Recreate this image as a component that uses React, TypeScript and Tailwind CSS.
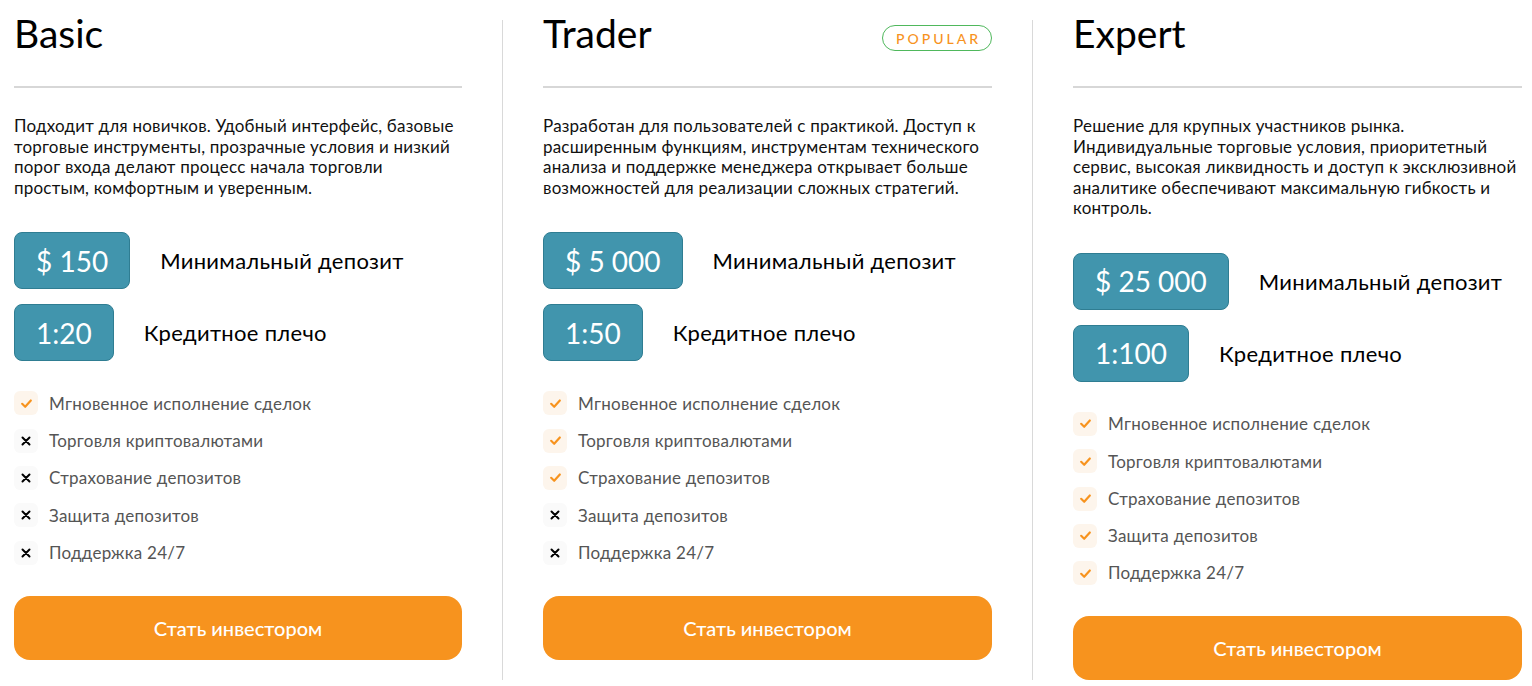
import React from 'react';

type Plan = {
  name: string;
  popular?: boolean;
  text: React.ReactNode;
  deposit: string;
  leverage: string;
  features: [string, boolean][];
};

const labels = [
  'Мгновенное исполнение сделок',
  'Торговля криптовалютами',
  'Страхование депозитов',
  'Защита депозитов',
  'Поддержка 24/7',
];

const plans: Plan[] = [
  {
    name: 'Basic',
    text: 'Подходит для новичков. Удобный интерфейс, базовые торговые инструменты, прозрачные условия и низкий порог входа делают процесс начала торговли простым, комфортным и уверенным.',
    deposit: '$ 150',
    leverage: '1:20',
    features: labels.map((l, i) => [l, i < 1] as [string, boolean]),
  },
  {
    name: 'Trader',
    popular: true,
    text: 'Разработан для пользователей с практикой. Доступ к расширенным функциям, инструментам технического анализа и поддержке менеджера открывает больше возможностей для реализации сложных стратегий.',
    deposit: '$ 5 000',
    leverage: '1:50',
    features: labels.map((l, i) => [l, i < 3] as [string, boolean]),
  },
  {
    name: 'Expert',
    text: (
      <>
        Решение для крупных участников рынка.
        <br />
        Индивидуальные торговые условия, приоритетный сервис, высокая ликвидность и доступ к эксклюзивной аналитике обеспечивают максимальную гибкость и контроль.
      </>
    ),
    deposit: '$ 25 000',
    leverage: '1:100',
    features: labels.map((l) => [l, true] as [string, boolean]),
  },
];

function Check() {
  return (
    <span className="flex h-6 w-6 shrink-0 items-center justify-center rounded-md bg-[#fdf5ec]">
      <svg width="13" height="13" viewBox="0 0 12 12" fill="none">
        <path d="M2 6.3 4.8 9 10 3.2" stroke="#f7931e" strokeWidth="2" strokeLinecap="round" strokeLinejoin="round" />
      </svg>
    </span>
  );
}

function Cross() {
  return (
    <span className="flex h-6 w-6 shrink-0 items-center justify-center rounded-md bg-[#fafafa]">
      <svg width="10" height="10" viewBox="0 0 10 10" fill="none">
        <path d="M1.5 1.5 8.5 8.5M8.5 1.5 1.5 8.5" stroke="#000" strokeWidth="2" strokeLinecap="round" />
      </svg>
    </span>
  );
}

function PlanColumn({ plan }: { plan: Plan }) {
  return (
    <div className="flex flex-col">
      <div className="flex h-[26px] items-start justify-between">
        <h2 className="text-[39px] leading-[26px] text-black">{plan.name}</h2>
        {plan.popular && (
          <span className="mt-[5px] flex h-[26px] w-[110px] items-center justify-center rounded-full border-[1.5px] border-[#4fb85c] pl-[3px] text-[14px] font-medium tracking-[3px] text-[#f7931e]">
            POPULAR
          </span>
        )}
      </div>
      <div className="mt-[40px] h-[2px] bg-[#d7d7d7]" />
      <p className="mt-[28px] text-[17px] leading-[20.6px] tracking-[0.2px] text-[#111]">{plan.text}</p>

      <div className="mt-[34px] flex flex-col gap-[15px]">
        <div className="flex items-center gap-[30px]">
          <span className="flex h-[57px] items-center rounded-lg border border-[#2f7d92] bg-[#4195ad] px-[21px] text-[28px] text-white">
            {plan.deposit}
          </span>
          <span className="text-[22px] tracking-[0.3px] text-black">Минимальный депозит</span>
        </div>
        <div className="flex items-center gap-[30px]">
          <span className="flex h-[57px] items-center rounded-lg border border-[#2f7d92] bg-[#4195ad] px-[21px] text-[28px] text-white">
            {plan.leverage}
          </span>
          <span className="text-[22px] tracking-[0.3px] text-black">Кредитное плечо</span>
        </div>
      </div>

      <ul className="mt-[30px] flex flex-col gap-[13.3px]">
        {plan.features.map(([label, ok]) => (
          <li key={label} className="flex h-6 items-center gap-[11px] text-[17px] tracking-[0.25px] text-[#555]">
            {ok ? <Check /> : <Cross />}
            {label}
          </li>
        ))}
      </ul>

      <button className="mt-[31px] h-16 w-full rounded-2xl bg-[#f7931e] text-[20px] font-medium text-white">
        Стать инвестором
      </button>
    </div>
  );
}

export default function App() {
  return (
    <div className="min-h-screen bg-white pl-[14px] pr-[10px] pt-5 font-['Lato',sans-serif]">
      <div className="grid grid-cols-[488px_530px_1fr]">
        <div className="pr-10">
          <PlanColumn plan={plans[0]} />
        </div>
        <div className="border-l border-[#d9d9d9] px-10">
          <PlanColumn plan={plans[1]} />
        </div>
        <div className="border-l border-[#d9d9d9] pl-10">
          <PlanColumn plan={plans[2]} />
        </div>
      </div>
    </div>
  );
}
